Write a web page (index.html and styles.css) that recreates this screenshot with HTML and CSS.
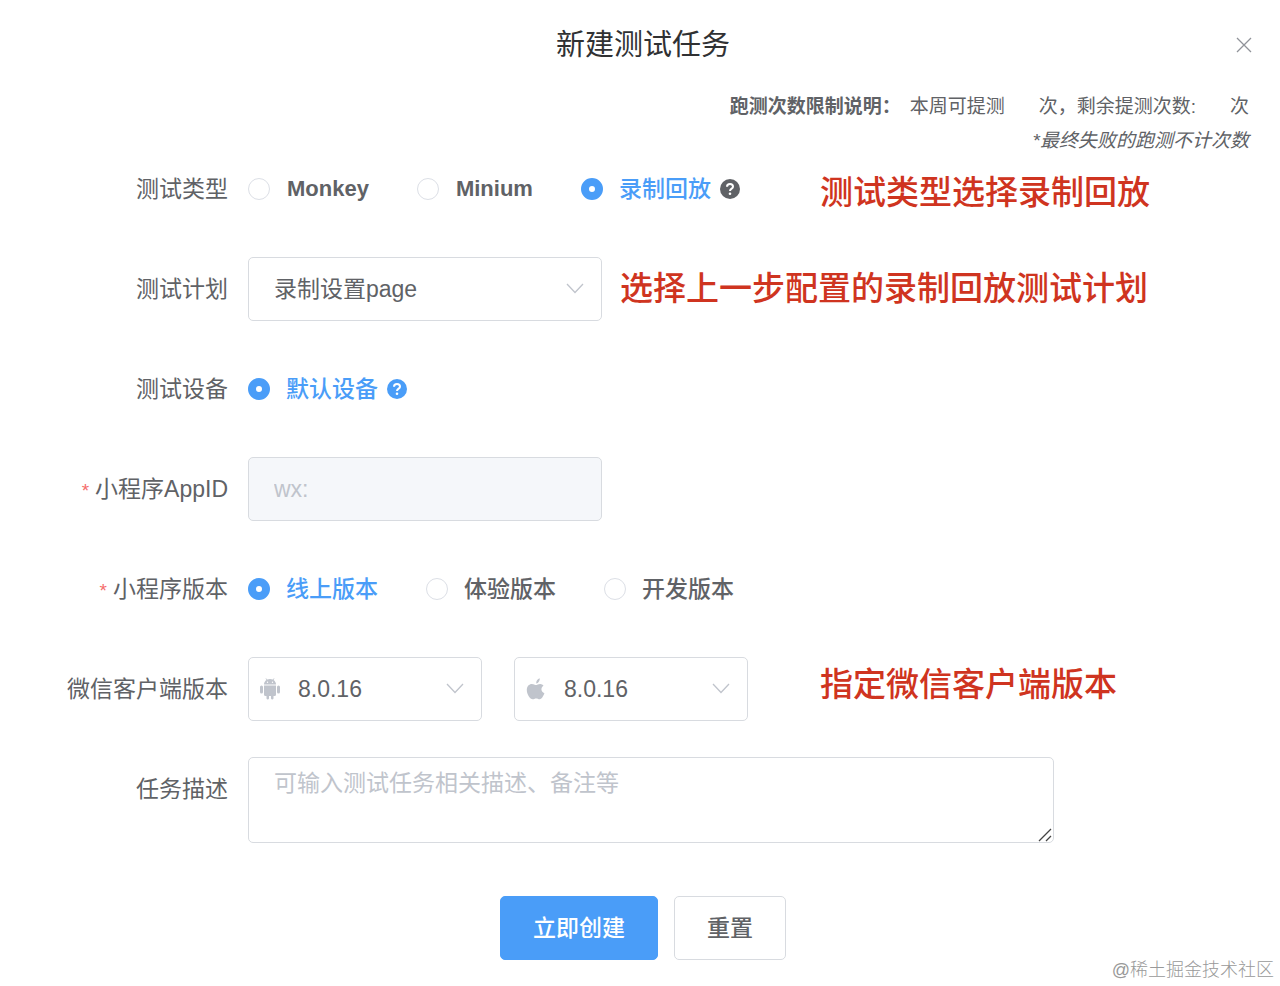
FILE: index.html
```html
<!DOCTYPE html>
<html lang="zh-CN">
    <head>
        <meta charset="utf-8">
        <meta name="viewport" content="width=device-width, initial-scale=1">
        <title>新建测试任务</title>
        <link rel="stylesheet" href="styles.css">
    </head>
    <body>
        <div class="dialog">
            <div class="header">
                <h1>新建测试任务</h1>
                <button type="button" class="close" aria-label="关闭">
                    <svg width="16" height="16" viewBox="0 0 16 16"><path d="M1 1L15 15M15 1L1 15" /></svg>
                </button>
            </div>

            <div class="notes">
                <p><strong>跑测次数限制说明：</strong>本周可提测<span class="blank"></span>次，剩余提测次数:<span class="blank"></span>次</p>
                <p><em>*最终失败的跑测不计次数</em></p>
            </div>

            <form class="task">
                <div class="row">
                    <span class="label" id="typeLabel">测试类型</span>
                    <div class="fields" role="radiogroup" aria-labelledby="typeLabel">
                        <label class="radio latin"><input type="radio" name="type">Monkey</label>
                        <label class="radio latin"><input type="radio" name="type">Minium</label>
                        <label class="radio"><input type="radio" name="type" checked><span>录制回放</span></label>
                        <svg class="help" width="20" height="20" viewBox="0 0 20 20">
                            <circle cx="10" cy="10" r="10" />
                            <path d="M7 7.7C7 4.2 13 4.2 13 7.7C13 9.7 10 9.6 10 12" />
                            <circle class="dot" cx="10" cy="14.8" r="1.3" />
                        </svg>
                    </div>
                    <span class="remark low">测试类型选择录制回放</span>
                </div>

                <div class="row">
                    <label class="label" for="plan">测试计划</label>
                    <div class="select wide">
                        <select id="plan"><option>录制设置page</option></select>
                        <svg class="arrow" width="18" height="11" viewBox="0 0 18 11"><path d="M1 1L9 9.500L17 1" /></svg>
                    </div>
                    <span class="remark">选择上一步配置的录制回放测试计划</span>
                </div>

                <div class="row">
                    <span class="label" id="deviceLabel">测试设备</span>
                    <div class="fields" role="radiogroup" aria-labelledby="deviceLabel">
                        <label class="radio"><input type="radio" name="device" checked><span>默认设备</span></label>
                        <svg class="help blue" width="20" height="20" viewBox="0 0 20 20">
                            <circle cx="10" cy="10" r="10" />
                            <path d="M7 7.7C7 4.2 13 4.2 13 7.7C13 9.7 10 9.6 10 12" />
                            <circle class="dot" cx="10" cy="14.8" r="1.3" />
                        </svg>
                    </div>
                </div>

                <div class="row">
                    <label class="label required" for="appid">小程序AppID</label>
                    <input type="text" class="text wide" id="appid" value="wx:" disabled>
                </div>

                <div class="row">
                    <span class="label required" id="versionLabel">小程序版本</span>
                    <div class="fields" role="radiogroup" aria-labelledby="versionLabel">
                        <label class="radio"><input type="radio" name="version" checked><span>线上版本</span></label>
                        <label class="radio"><input type="radio" name="version"><span>体验版本</span></label>
                        <label class="radio"><input type="radio" name="version"><span>开发版本</span></label>
                    </div>
                </div>

                <div class="row">
                    <label class="label" for="android">微信客户端版本</label>
                    <div class="fields clients">
                        <div class="select client">
                            <svg class="os" width="22" height="22" viewBox="0 0 22 22">
                                <path d="M5 6.500C5 4.500 6 3 7.500 2L6.500 .6L7 .3L8.200 1.600C10 .9 12 .9 13.800 1.600L15 .3L15.500 .6L14.500 2C16 3 17 4.500 17 6.500Z" />
                                <path d="M5 7.500H17V16.500Q17 18 15.500 18H14.500V20.600A1.300 1.300 0 0 1 12 20.600V18H10V20.600A1.300 1.300 0 0 1 7.500 20.600V18H6.500Q5 18 5 16.500Z" />
                                <rect x="1" y="7.500" width="3" height="8" rx="1.500" />
                                <rect x="18" y="7.500" width="3" height="8" rx="1.500" />
                                <circle class="eye" cx="8.500" cy="4.300" r=".7" />
                                <circle class="eye" cx="13.500" cy="4.300" r=".7" />
                            </svg>
                            <select id="android"><option>8.0.16</option></select>
                            <svg class="arrow" width="18" height="11" viewBox="0 0 18 11"><path d="M1 1L9 9.500L17 1" /></svg>
                        </div>
                        <div class="select client">
                            <svg class="os" width="22" height="22" viewBox="0 0 22 22">
                                <path d="M11.200 5.600C10.900 3.200 12.500 .8 14.700 .3C15 2.600 13.600 5.200 11.200 5.600Z" />
                                <path d="M18.500 7.800C15.400 9.700 15.900 13.900 19.400 15.300C18.600 17.500 16.900 21.200 14.700 21.300C13.300 21.300 12.800 20.500 11.200 20.500C9.600 20.500 9 21.300 7.700 21.300C5 21.300 1.800 16.300 1.800 12C1.800 8.200 4.100 6 6.900 6C8.600 6 9.900 7.100 11 7.100C12 7.100 13.500 5.900 15.300 6C16.600 6.100 17.800 6.700 18.500 7.800Z" />
                            </svg>
                            <select id="ios" aria-label="iOS 微信客户端版本"><option>8.0.16</option></select>
                            <svg class="arrow" width="18" height="11" viewBox="0 0 18 11"><path d="M1 1L9 9.500L17 1" /></svg>
                        </div>
                    </div>
                    <span class="remark high">指定微信客户端版本</span>
                </div>

                <div class="row">
                    <label class="label" for="desc">任务描述</label>
                    <div class="description">
                        <textarea id="desc" placeholder="可输入测试任务相关描述、备注等"></textarea>
                        <svg class="grip" width="14" height="14" viewBox="0 0 14 14"><path d="M1 13L13 1M8 13L13 8" /></svg>
                    </div>
                </div>

                <div class="actions">
                    <button type="submit" class="button primary">立即创建</button>
                    <button type="reset" class="button">重置</button>
                </div>
            </form>

            <div class="watermark">@稀土掘金技术社区</div>
        </div>
    </body>
</html>
```
FILE: styles.css
```css
* {
    box-sizing:         border-box;
}

body {
    background:         #fff;
    color:              #606266;
    font-family:        "Liberation Sans", "Noto Sans CJK SC", sans-serif;
    font-size:          23px;
    line-height:        34px;
    margin:             0;
}

input, select, textarea, button {
    color:              inherit;
    font:               inherit;
    margin:             0;
}

svg {
    flex:               none;
}

/* Header */
.header {
    align-items:        center;
    display:            flex;
    height:             90px;
    padding:            0 28px 0 50px;
}

.header h1 {
    color:              #303133;
    flex:               1;
    font-size:          29px;
    font-weight:        400;
    margin:             0;
    text-align:         center;
}

.close {
    background:         none;
    border:             0;
    display:            flex;
    padding:            0;
}

.close path {
    fill:               none;
    stroke:             #909399;
    stroke-width:       1.3;
}

.notes {
    font-size:          19px;
    height:             67px;
    padding:            0 31px;
    text-align:         right;
}

.notes p {
    margin:             0;
}

.notes strong {
    font-weight:        700;
    margin-right:       9px;
}

.notes .blank {
    display:            inline-block;
    width:              34px;
}

/* Form rows */
.row {
    display:            flex;
    margin-bottom:      36px;
    min-height:         64px;
}

.label {
    flex:               none;
    line-height:        64px;
    padding-right:      20px;
    text-align:         right;
    width:              248px;
}

.required::before {
    color:              #f56c6c;
    content:            "*";
    font-size:          19px;
    line-height:        20px;
    margin-right:       6px;
}

.fields {
    align-items:        center;
    display:            flex;
    min-width:          554px;
}

/* Radios */
.radio {
    align-items:        center;
    display:            flex;
    font-weight:        500;
    gap:                16px;
}

.radio + .radio {
    margin-left:        48px;
}

.radio.latin {
    font-size:          22px;
    font-weight:        700;
    gap:                17px;
}

.radio input {
    appearance:         none;
    background:         #fff;
    border:             1px solid #dcdfe6;
    border-radius:      50%;
    height:             22px;
    width:              22px;
}

.radio input:checked {
    border:             8px solid #4a9df8;
}

.radio input:checked + span {
    color:              #4a9df8;
}

.help {
    fill:               #606266;
    margin-left:        9px;
}

.help.blue {
    fill:               #4a9df8;
}

.help path {
    fill:               none;
    stroke:             #fff;
    stroke-width:       2;
}

.help .dot {
    fill:               #fff;
}

/* Inputs */
.text, .select select, .description textarea {
    background:         #fff;
    border:             1px solid #d8dbe0;
    border-radius:      5px;
    display:            block;
    outline:            none;
    padding:            0 25px;
}

.text, .select select {
    appearance:         none;
    height:             64px;
    width:              100%;
}

.text:disabled {
    background:         #f5f7fa;
    color:              #c0c4cc;
    opacity:            1;
}

.wide {
    flex:               none;
    max-width:          354px;
}

.select {
    position:           relative;
    width:              100%;
}

.clients {
    gap:                32px;
}

.client {
    width:              234px;
}

.client select {
    padding-left:       49px;
}

.arrow {
    pointer-events:     none;
    position:           absolute;
    right:              18px;
    top:                26px;
}

.arrow path {
    fill:               none;
    stroke:             #c0c4cc;
    stroke-width:       1.3;
}

.os {
    fill:               #c0c4cc;
    left:               11px;
    pointer-events:     none;
    position:           absolute;
    top:                21px;
}

.os .eye {
    fill:               #fff;
}

.description {
    flex:               1;
    max-width:          806px;
    position:           relative;
}

.description textarea {
    height:             86px;
    padding-top:        8px;
    resize:             none;
    width:              100%;
}

.description textarea::placeholder {
    color:              #c0c4cc;
}

.grip {
    bottom:             1px;
    pointer-events:     none;
    position:           absolute;
    right:              2px;
}

.grip path {
    fill:               none;
    stroke:             #444;
    stroke-width:       1.3;
}

/* Red remarks beside the fields */
.remark {
    align-self:         center;
    color:              #cf3420;
    font-size:          33px;
    font-weight:        500;
    line-height:        56px;
    margin-left:        18px;
    white-space:        nowrap;
}

.remark.low {
    align-self:         flex-end;
}

.remark.high {
    align-self:         flex-start;
}

/* Buttons */
.actions {
    display:            flex;
    gap:                16px;
    justify-content:    center;
    padding:            17px 0 0 6px;
}

.button {
    background:         #fff;
    border:             1px solid #d8dbe0;
    border-radius:      5px;
    font-weight:        500;
    height:             64px;
    padding:            0 32px;
}

.button.primary {
    background:         #4a9df8;
    border-color:       #4a9df8;
    color:              #fff;
}

.watermark {
    color:              #999;
    font-size:          18px;
    font-weight:        300;
    line-height:        20px;
    padding:            0 6px 6px;
    text-align:         right;
}
```
